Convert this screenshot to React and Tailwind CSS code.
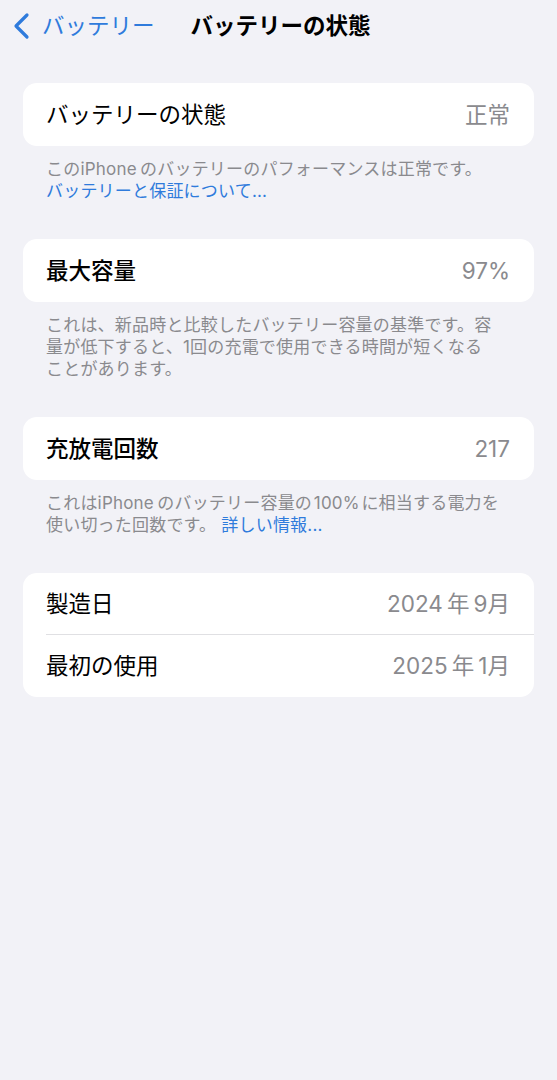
import React from "react";

const font = { fontFamily: '"Inter", "Noto Sans CJK JP", sans-serif' };

function Card({ children }) {
  return <div className="mx-[23px] bg-white rounded-[14px] overflow-hidden">{children}</div>;
}

function Footer({ children }) {
  return (
    <div className="px-[46px] pt-[12px] text-[17px] leading-[22px] text-[#8a8a8e] tracking-[0.2px]">{children}</div>
  );
}

export default function App() {
  return (
    <div className="w-[557px] min-h-[1080px] bg-[#f2f2f7]" style={font}>
      <div className="h-[52px] flex items-center">
        <div className="flex items-center pl-[12px] text-[#2f7bdc]">
          <svg width="20" height="28" viewBox="0 0 20 28" className="mt-[-1px]">
            <path d="M15 3 L4 14 L15 25" fill="none" stroke="#2f7bdc" strokeWidth="3.2" strokeLinecap="round" strokeLinejoin="round" />
          </svg>
          <span className="ml-[10px] text-[22.5px]">バッテリー</span>
        </div>
        <span className="ml-[36px] text-[22.5px] font-bold text-black">バッテリーの状態</span>
      </div>

      <div className="pt-[31px]">
        <Card>
          <div className="h-[63px] flex items-center justify-between pl-[23px] pr-[24px]">
            <span className="text-[22.5px] text-black">バッテリーの状態</span>
            <span className="text-[22.5px] text-[#8a8a8e]">正常</span>
          </div>
        </Card>
        <Footer>
          このiPhone&#8201;のバッテリーのパフォーマンスは正常です。
          <br />
          <span className="text-[#2f7bdc]">バッテリーと保証について...</span>
        </Footer>
      </div>

      <div className="pt-[37px]">
        <Card>
          <div className="h-[63px] flex items-center justify-between pl-[23px] pr-[24px]">
            <span className="text-[22.5px] text-black font-medium">最大容量</span>
            <span className="text-[22.5px] text-[#8a8a8e]">97%</span>
          </div>
        </Card>
        <Footer>
          これは、新品時と比較したバッテリー容量の基準です。容
          <br />
          量が低下すると、1回の充電で使用できる時間が短くなる
          <br />
          ことがあります。
        </Footer>
      </div>

      <div className="pt-[37px]">
        <Card>
          <div className="h-[63px] flex items-center justify-between pl-[23px] pr-[24px]">
            <span className="text-[22.5px] text-black font-medium">充放電回数</span>
            <span className="text-[22.5px] text-[#8a8a8e]">217</span>
          </div>
        </Card>
        <Footer>
          これはiPhone&#8201;のバッテリー容量の&#8202;100%&#8202;に相当する電力を
          <br />
          使い切った回数です。 <span className="text-[#2f7bdc]">詳しい情報...</span>
        </Footer>
      </div>

      <div className="pt-[37px]">
        <Card>
          <div className="relative h-[62px] flex items-center justify-between pl-[23px] pr-[24px]">
            <span className="text-[22.5px] text-black">製造日</span>
            <span className="text-[22.5px] text-[#8a8a8e]">2024&#8201;年&#8201;9月</span>
            <div className="absolute left-[23px] right-0 bottom-0 h-px bg-[#e0e0e3]" />
          </div>
          <div className="h-[62px] flex items-center justify-between pl-[23px] pr-[24px]">
            <span className="text-[22.5px] text-black">最初の使用</span>
            <span className="text-[22.5px] text-[#8a8a8e]">2025&#8201;年&#8201;1月</span>
          </div>
        </Card>
      </div>
    </div>
  );
}
